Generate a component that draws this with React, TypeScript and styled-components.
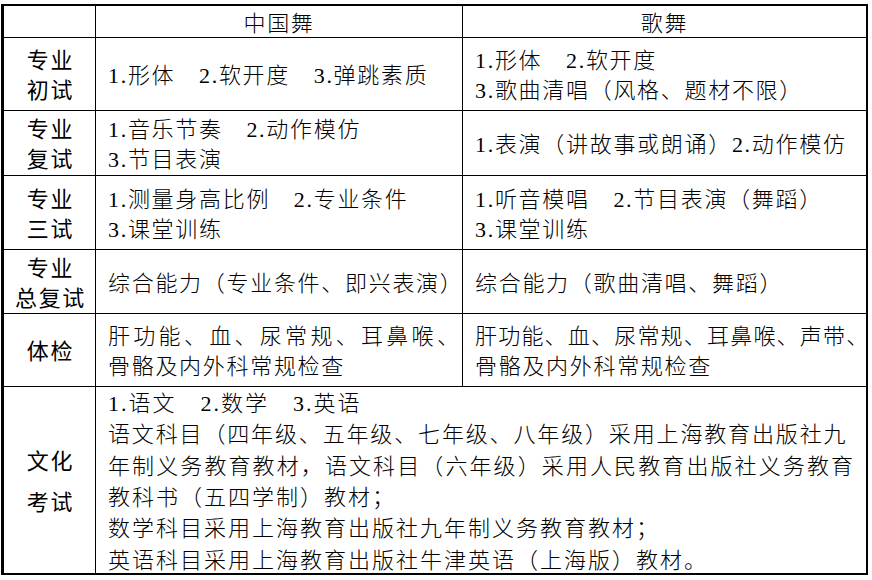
import React from "react";
import styled, { createGlobalStyle } from "styled-components";

const Global = createGlobalStyle`
  html, body { margin: 0; padding: 0; background: #fff; }
  body { font-family: "Liberation Serif", "Noto Sans CJK SC", serif; color: #000; }
`;

const Table = styled.div`
  display: grid;
  grid-template-columns: 91px 366px 403px;
  grid-template-rows: 31px 72px 64px 73px 63px 72px 186px;
  gap: 1px;
  background: #000;
  border: 2px solid #000;
  border-left-width: 3px;
  width: max-content;
  margin: 4px 0 0 1px;
  font-size: 22px;
`;

const Cell = styled.div<{ $span?: number; $ls?: number }>`
  background: #fff;
  display: flex;
  flex-direction: column;
  justify-content: center;
  padding-top: 4px;
  box-sizing: border-box;
  grid-column: ${(p) => (p.$span ? `span ${p.$span}` : "auto")};
  white-space: nowrap;
  letter-spacing: ${(p) => p.$ls ?? 1.7}px;
  font-weight: 300;
`;

const HeadCell = styled(Cell)`
  align-items: center;
  line-height: 30px;
`;

const LabelCell = styled(Cell)<{ $lh?: number }>`
  align-items: center;
  text-align: center;
  line-height: ${(p) => p.$lh ?? 30}px;
  font-weight: 400;
  padding-left: 2px;
`;

const ContentCell = styled(Cell)<{ $lh?: number }>`
  align-items: flex-start;
  padding-left: 12px;
  line-height: ${(p) => p.$lh ?? 30}px;
`;

const Line = styled.div<{ $ls?: number }>`
  letter-spacing: ${(p) => (p.$ls !== undefined ? `${p.$ls}px` : "inherit")};
`;

const S = "\u3000";

type L = string | { t: string; ls: number };
type Row = { label: string[]; a: L[]; b: L[] };

const rows: Row[] = [
  {
    label: ["专业", "初试"],
    a: [`1.形体${S}2.软开度${S}3.弹跳素质`],
    b: [`1.形体${S}2.软开度`, "3.歌曲清唱（风格、题材不限）"],
  },
  {
    label: ["专业", "复试"],
    a: [`1.音乐节奏${S}2.动作模仿`, "3.节目表演"],
    b: ["1.表演（讲故事或朗诵）2.动作模仿"],
  },
  {
    label: ["专业", "三试"],
    a: [`1.测量身高比例${S}2.专业条件`, "3.课堂训练"],
    b: [`1.听音模唱${S}2.节目表演（舞蹈）`, "3.课堂训练"],
  },
  {
    label: ["专业", "总复试"],
    a: ["综合能力（专业条件、即兴表演）"],
    b: ["综合能力（歌曲清唱、舞蹈）"],
  },
  {
    label: ["体检"],
    a: [{ t: "肝功能、血、尿常规、耳鼻喉、", ls: 3.3 }, "骨骼及内外科常规检查"],
    b: [{ t: "肝功能、血、尿常规、耳鼻喉、声带、", ls: 1.2 }, "骨骼及内外科常规检查"],
  },
];

const culture: L[] = [
  `1.语文${S}2.数学${S}3.英语`,
  { t: "语文科目（四年级、五年级、七年级、八年级）采用上海教育出版社九", ls: 1.85 },
  { t: "年制义务教育教材，语文科目（六年级）采用人民教育出版社义务教育", ls: 2.1 },
  "教科书（五四学制）教材；",
  "数学科目采用上海教育出版社九年制义务教育教材；",
  "英语科目采用上海教育出版社牛津英语（上海版）教材。",
];

const Lines = ({ items }: { items: L[] }) => (
  <>
    {items.map((it, i) =>
      typeof it === "string" ? (
        <Line key={i}>{it}</Line>
      ) : (
        <Line key={i} $ls={it.ls}>
          {it.t}
        </Line>
      )
    )}
  </>
);

export default function App() {
  return (
    <>
      <Global />
      <Table>
        <HeadCell />
        <HeadCell>中国舞</HeadCell>
        <HeadCell>歌舞</HeadCell>
        {rows.map((r, i) => (
          <React.Fragment key={i}>
            <LabelCell>
              <Lines items={r.label} />
            </LabelCell>
            <ContentCell>
              <Lines items={r.a} />
            </ContentCell>
            <ContentCell>
              <Lines items={r.b} />
            </ContentCell>
          </React.Fragment>
        ))}
        <LabelCell $lh={41}>
          <Lines items={["文化", "考试"]} />
        </LabelCell>
        <ContentCell $span={2} $lh={31.4} $ls={2}>
          <Lines items={culture} />
        </ContentCell>
      </Table>
    </>
  );
}
